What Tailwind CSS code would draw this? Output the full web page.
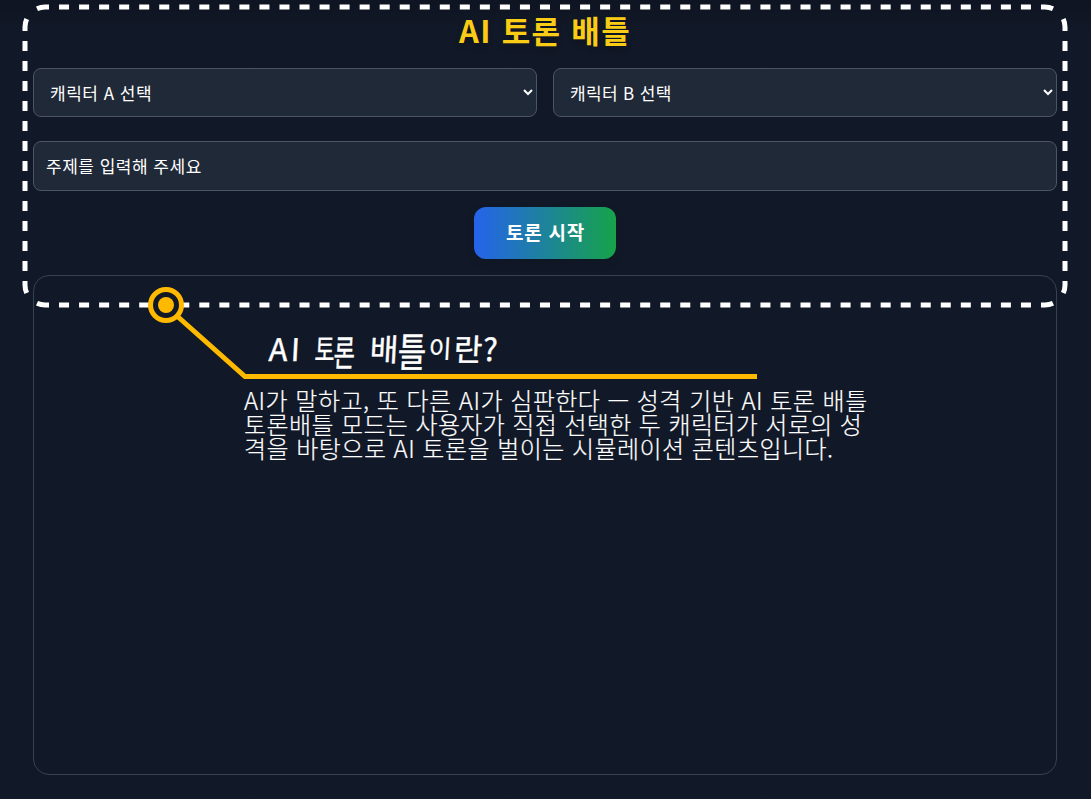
<!DOCTYPE html>
<html lang="ko">
<head>
<meta charset="utf-8">
<title>AI 토론 배틀</title>
<script src="https://cdn.jsdelivr.net/npm/@tailwindcss/browser@4"></script>
</head>
<body class="relative h-[799px] overflow-hidden bg-[#111827] text-white font-['Noto_Sans_CJK_KR',sans-serif]">
<div class="flex flex-col h-full pl-[33px] pr-[34px] bg-linear-to-b from-[#0e1421] to-[#111827] to-[30px]">
  <h1 class="h-[68px] pt-[10px] text-center text-[31px] leading-[40px] font-bold tracking-[1.3px] text-[#facc15] whitespace-nowrap [text-shadow:0_4px_6px_rgb(0_0_0/0.2)]">AI 토론 배틀</h1>
  <div class="grid grid-cols-2 gap-4">
    <select class="h-[49px] rounded-lg border border-[#4b5563] bg-[#1f2937] px-3 text-[17px] tracking-[0.5px] text-white"><option>캐릭터 A 선택</option></select>
    <select class="h-[49px] rounded-lg border border-[#4b5563] bg-[#1f2937] px-3 text-[17px] tracking-[0.35px] text-white"><option>캐릭터 B 선택</option></select>
  </div>
  <input class="mt-6 h-[50px] shrink-0 rounded-lg border border-[#4b5563] bg-[#1f2937] px-3 pb-[2px] text-[17px] tracking-[0.5px] text-white placeholder:text-white" placeholder="주제를 입력해 주세요">
  <button class="mt-4 h-[52px] w-[142px] shrink-0 self-center rounded-xl bg-linear-to-r/srgb from-[#2563eb] to-[#16a34a] pb-px pl-px text-[19px] font-bold tracking-[0.8px] whitespace-nowrap shadow-[0_4px_10px_rgb(0_0_0/0.1)]">토론 시작</button>
  <div class="mt-4 h-[500px] shrink-0 rounded-2xl border border-[#374151] pl-[210px]">
    <h2 class="mt-[47px] h-[51px] pl-[25px] text-[31px] leading-[50px] font-normal whitespace-nowrap [-webkit-text-stroke:0.4px_white]"><span class="inline-block w-[46px] tracking-[3px] -skew-x-3">AI </span><span class="inline-block w-[55px] -skew-x-3"><span class="inline-block w-[19px]"><span class="inline-block origin-left scale-x-70">토</span></span><span class="inline-block translate-y-[3px] origin-left scale-x-75 scale-y-115">론</span> </span><span class="inline-block -skew-x-3"><span class="inline-block w-[28px]">배</span><span class="inline-block w-[28px] translate-y-[2px] scale-y-130">틀</span><span class="inline-block w-[28px] scale-80">이</span><span class="inline-block w-[29px]">란</span><span class="inline-block">?</span></span></h2>
    <p class="mt-[14px] text-[24px] leading-[24px] font-light whitespace-nowrap [-webkit-text-stroke:0.2px_white]">
      <span class="block w-max tracking-[0.48px]">AI가 말하고, 또 다른 AI가 심판한다 — 성격 기반 AI 토론 배틀</span>
      <span class="block w-max tracking-[0.38px]">토론배틀 모드는 사용자가 직접 선택한 두 캐릭터가 서로의 성</span>
      <span class="block w-max tracking-[0.46px]">격을 바탕으로 AI 토론을 벌이는 시뮬레이션 콘텐츠입니다.</span>
    </p>
  </div>
</div>
<svg class="pointer-events-none absolute inset-0" width="1091" height="799" fill="none">
  <g stroke="#fff" stroke-width="5">
    <path d="M49 7H1041M49 305H1041" stroke-dasharray="10.02" stroke-dashoffset="10.02"/>
    <path d="M25 31V281M1065 31V281" stroke-dasharray="10" stroke-dashoffset="10"/>
    <path d="M37 8.7A20 20 0 0 1 45 7H49M1041 7H1045A20 20 0 0 1 1053 8.7M25 31V27A20 20 0 0 1 26.7 19M1065 31V27A20 20 0 0 0 1063.3 19M25 281V285A20 20 0 0 0 26.7 293M1065 281V285A20 20 0 0 1 1063.3 293M37 303.3A20 20 0 0 0 45 305H49M1041 305H1045A20 20 0 0 0 1053 303.3"/>
  </g>
  <path d="M177 316L245 376.5H757" stroke="#ffba00" stroke-width="5"/>
  <circle cx="166" cy="305" r="15.5" fill="#111827" stroke="#ffba00" stroke-width="5"/>
  <circle cx="166" cy="305" r="8" fill="#ffba00"/>
</svg>
</body>
</html>
